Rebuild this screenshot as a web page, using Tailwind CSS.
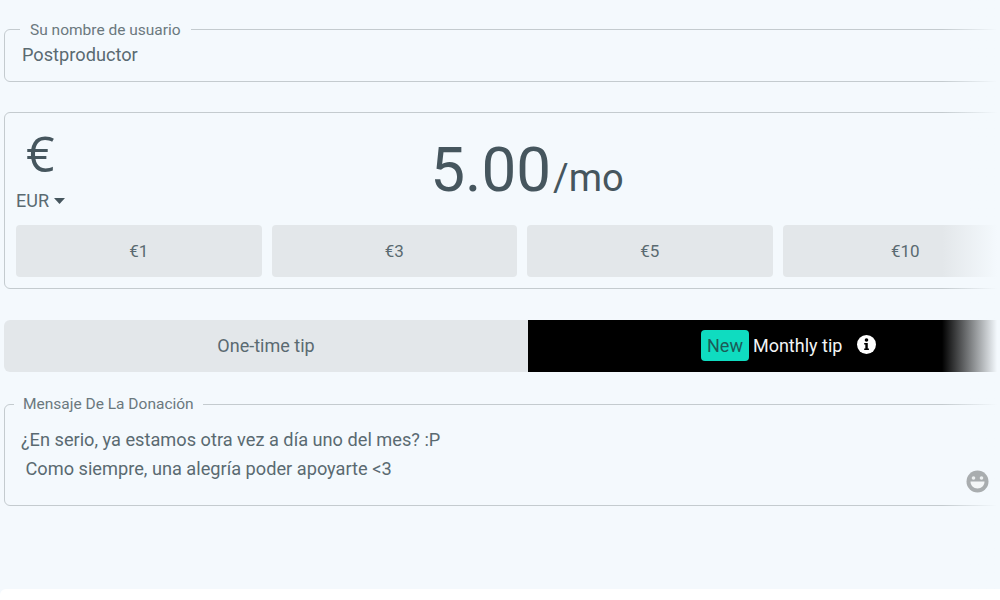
<!DOCTYPE html>
<html lang="es">
<head>
<meta charset="utf-8">
<title>Tip</title>
<script src="https://cdn.jsdelivr.net/npm/@tailwindcss/browser@4"></script>
</head>
<body class="m-0 bg-[#f4f9fd] font-['Roboto',sans-serif]">
<div class="relative w-[1000px] h-[600px] overflow-hidden">
  <div class="w-[1006px] ml-1 flex flex-col">

    <!-- username -->
    <fieldset class="mt-[18px] h-[64px] border border-[#c4cbcf] rounded-md pl-[17px]">
      <legend class="-ml-[2px] px-[10px] pt-[2px] text-[15.500px] leading-[20px] text-[#6b787e]">Su nombre de usuario</legend>
      <div class="text-[18.200px] leading-[24px] text-[#5a6a71] mt-[3px]">Postproductor</div>
    </fieldset>

    <!-- amount -->
    <div class="mt-[30px] h-[177px] border border-[#c4cbcf] rounded-md px-[11px] flex flex-col">
      <div class="relative h-[112px]">
        <div class="absolute left-[10px] top-[10px] text-[50px] leading-[60px] text-[#46565e] font-['Open_Sans',sans-serif]">€</div>
        <div class="absolute left-0 top-[77px] flex items-center gap-[5px] text-[18px] leading-[22px] text-[#5a6a71]">
          EUR
          <svg width="11" height="6" viewBox="0 0 11 6"><path d="M0 0h11L5.500 6z" fill="#46565e"/></svg>
        </div>
        <div class="flex justify-center items-baseline pt-[18px] pl-[40px] text-[#46565e]">
          <span class="text-[62px] leading-[78px]">5.00</span><span class="text-[38px] leading-[78px] ml-[2px]">/mo</span>
        </div>
      </div>
      <div class="grid grid-cols-4 gap-[10px] w-[1012px]">
        <button class="h-[52px] pt-[1px] rounded bg-[#e3e7ea] text-[17px] text-[#5a6a71]">€1</button>
        <button class="h-[52px] pt-[1px] rounded bg-[#e3e7ea] text-[17px] text-[#5a6a71]">€3</button>
        <button class="h-[52px] pt-[1px] rounded bg-[#e3e7ea] text-[17px] text-[#5a6a71]">€5</button>
        <button class="h-[52px] pt-[1px] rounded bg-[#e3e7ea] text-[17px] text-[#5a6a71]">€10</button>
      </div>
    </div>

    <!-- tip type -->
    <div class="mt-[31px] h-[52px] flex text-[18px]">
      <div class="w-[524px] pb-[2px] rounded-l-md bg-[#e3e7ea] text-[#5a6a71] flex items-center justify-center">One-time tip</div>
      <div class="flex-1 pb-[2px] bg-black text-[#f2f4f6] flex items-center pl-[173px]">
        <span class="h-[31px] px-[6px] mr-[4px] rounded bg-[#0fdcc0] text-[#1b5a57] flex items-center">New</span>
        <span>Monthly tip</span>
        <svg class="ml-[15px] -mt-[2px]" width="19" height="19" viewBox="0 0 18 18">
          <circle cx="9" cy="9" r="9" fill="#fff"/>
          <circle cx="9" cy="4.800" r="1.700" fill="#000"/>
          <path d="M6.800 7.500h3.400v5.300h1.100v1.500H6.800v-1.500h1.100V9H6.800z" fill="#000"/>
        </svg>
      </div>
    </div>

    <!-- message -->
    <fieldset class="mt-[22px] h-[112px] border border-[#c4cbcf] rounded-md pl-[16px]">
      <legend class="-ml-[7px] px-[9px] text-[15.500px] leading-[20px] text-[#6b787e]">Mensaje De La Donación</legend>
      <div class="mt-[11px] text-[18.200px] leading-[29px] text-[#5a6a71] whitespace-pre">¿En serio, ya estamos otra vez a día uno del mes? :P
 Como siempre, una alegría poder apoyarte &lt;3</div>
    </fieldset>
  </div>

  <!-- edge fade -->
  <div class="absolute left-[942px] top-0 w-[58px] h-full bg-gradient-to-r from-[#f4f9fd]/0 to-[#f4f9fd] to-95%"></div>

  <!-- emoji button -->
  <svg class="absolute left-[966px] top-[470px]" width="23" height="23" viewBox="0 0 23 23">
    <circle cx="11.500" cy="11.500" r="11" fill="#a9adaf"/>
    <circle cx="7.500" cy="8" r="1.800" fill="#eceff0"/>
    <circle cx="15.500" cy="8" r="1.800" fill="#eceff0"/>
    <path d="M4.500 11.500h14c0 4-3 7-7 7s-7-3-7-7z" fill="#f4f6f7"/>
  </svg>

  <!-- bottom card -->
  <div class="absolute left-0 right-0 bottom-0 h-[11px] bg-white rounded-tl-md"></div>
</div>
</body>
</html>
